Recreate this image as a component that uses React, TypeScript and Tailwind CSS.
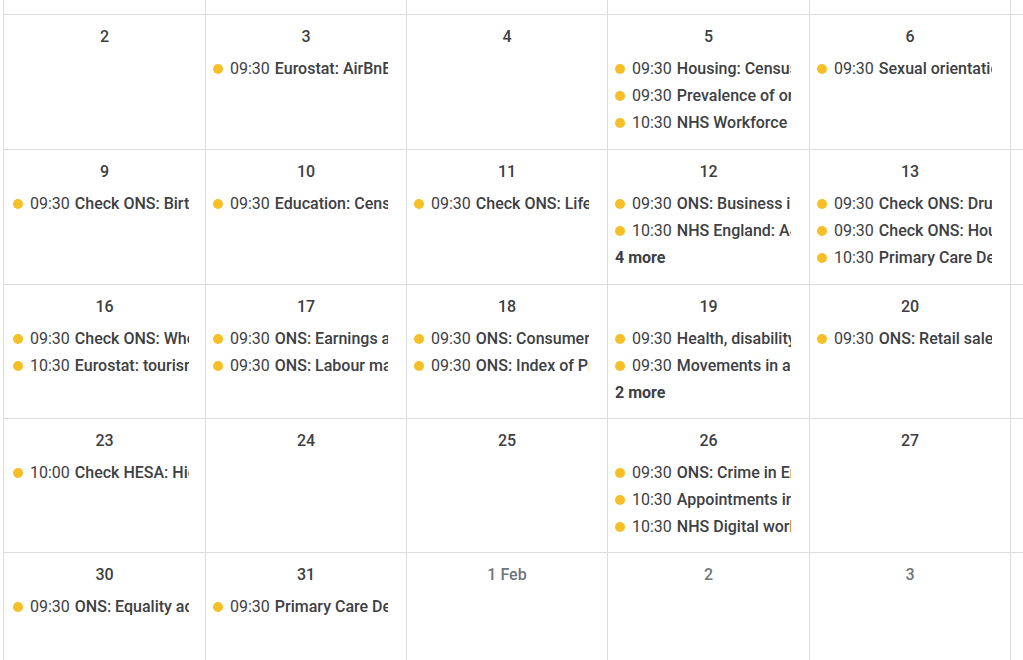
type Ev = { time: string; title: string };
type Day = { label: string; faded?: boolean; events?: Ev[]; more?: string };

const weeks: Day[][] = [
  [
    { label: "2" },
    { label: "3", events: [{ time: "09:30", title: "Eurostat: AirBnB bookings" }] },
    { label: "4" },
    {
      label: "5",
      events: [
        { time: "09:30", title: "Housing: Census 2021" },
        { time: "09:30", title: "Prevalence of ongoing symptoms" },
        { time: "10:30", title: "NHS Workforce Statistics" },
      ],
    },
    { label: "6", events: [{ time: "09:30", title: "Sexual orientation: Census 2021" }] },
    { label: "7" },
    { label: "8" },
  ],
  [
    { label: "9", events: [{ time: "09:30", title: "Check ONS: Births in England" }] },
    { label: "10", events: [{ time: "09:30", title: "Education: Census 2021" }] },
    { label: "11", events: [{ time: "09:30", title: "Check ONS: Life expectancy" }] },
    {
      label: "12",
      events: [
        { time: "09:30", title: "ONS: Business insights" },
        { time: "10:30", title: "NHS England: A&E attendances" },
      ],
      more: "4 more",
    },
    {
      label: "13",
      events: [
        { time: "09:30", title: "Check ONS: Drug deaths" },
        { time: "09:30", title: "Check ONS: House prices" },
        { time: "10:30", title: "Primary Care Dementia Data" },
      ],
    },
    { label: "14" },
    { label: "15" },
  ],
  [
    {
      label: "16",
      events: [
        { time: "09:30", title: "Check ONS: Who is missing out" },
        { time: "10:30", title: "Eurostat: tourism statistics" },
      ],
    },
    {
      label: "17",
      events: [
        { time: "09:30", title: "ONS: Earnings and employment" },
        { time: "09:30", title: "ONS: Labour market overview" },
      ],
    },
    {
      label: "18",
      events: [
        { time: "09:30", title: "ONS: Consumer price inflation" },
        { time: "09:30", title: "ONS: Index of Private Housing" },
      ],
    },
    {
      label: "19",
      events: [
        { time: "09:30", title: "Health, disability and care" },
        { time: "09:30", title: "Movements in average weekly" },
      ],
      more: "2 more",
    },
    { label: "20", events: [{ time: "09:30", title: "ONS: Retail sales" }] },
    { label: "21" },
    { label: "22" },
  ],
  [
    { label: "23", events: [{ time: "10:00", title: "Check HESA: Higher education" }] },
    { label: "24" },
    { label: "25" },
    {
      label: "26",
      events: [
        { time: "09:30", title: "ONS: Crime in England" },
        { time: "10:30", title: "Appointments in General Practice" },
        { time: "10:30", title: "NHS Digital workforce" },
      ],
    },
    { label: "27" },
    { label: "28" },
    { label: "29" },
  ],
  [
    { label: "30", events: [{ time: "09:30", title: "ONS: Equality act" }] },
    { label: "31", events: [{ time: "09:30", title: "Primary Care Dementia Data" }] },
    { label: "1 Feb", faded: true },
    { label: "2", faded: true },
    { label: "3", faded: true },
    { label: "4", faded: true },
    { label: "5", faded: true },
  ],
];

const cols = "grid grid-cols-[202px_201px_201px_202px_201px_201px_201px]";
const rowHeights = ["h-[135px]", "h-[135px]", "h-[134px]", "h-[134px]", "h-[140px]"];

function DayCell({ day, h, first }: { day: Day; h: string; first: boolean }) {
  return (
    <div className={`${h} border-r border-b border-[#dadce0] pt-3 overflow-hidden`}>
      <div
        className={`h-5 text-center text-[16px] leading-5 font-medium ${
          day.faded ? "text-[#70757a]" : "text-[#3c4043]"
        }`}
      >
        {day.label}
      </div>
      <div className={`mt-2 flex flex-col ${first ? "pl-[9px] pr-[16px]" : "pl-[7px] pr-[18px]"}`}>
        {day.events?.map((ev, i) => (
          <div key={i} className="flex h-[27px] items-center overflow-hidden whitespace-nowrap">
            <span className="h-2.5 w-2.5 shrink-0 rounded-full bg-[#f6bf26]" />
            <span className="ml-[7px] text-[16px] text-[#3c4043]">{ev.time}</span>
            <span className="ml-[5px] text-[16px] font-medium text-[#3c4043]">{ev.title}</span>
          </div>
        ))}
        {day.more && (
          <div className="flex h-[27px] items-center text-[16px] font-bold text-[#3c4043]">{day.more}</div>
        )}
      </div>
    </div>
  );
}

export default function App() {
  return (
    <div className="h-[660px] w-[1023px] overflow-hidden bg-white font-['Roboto','Liberation_Sans',sans-serif]">
      <div className="ml-[3px] w-max border-l border-[#dadce0]">
        <div className={cols}>
          {weeks[0].map((_, i) => (
            <div key={i} className="h-[15px] border-r border-b border-[#dadce0]" />
          ))}
        </div>
        {weeks.map((week, w) => (
          <div key={w} className={cols}>
            {week.map((day, d) => (
              <DayCell key={d} day={day} h={rowHeights[w]} first={d === 0} />
            ))}
          </div>
        ))}
      </div>
    </div>
  );
}
